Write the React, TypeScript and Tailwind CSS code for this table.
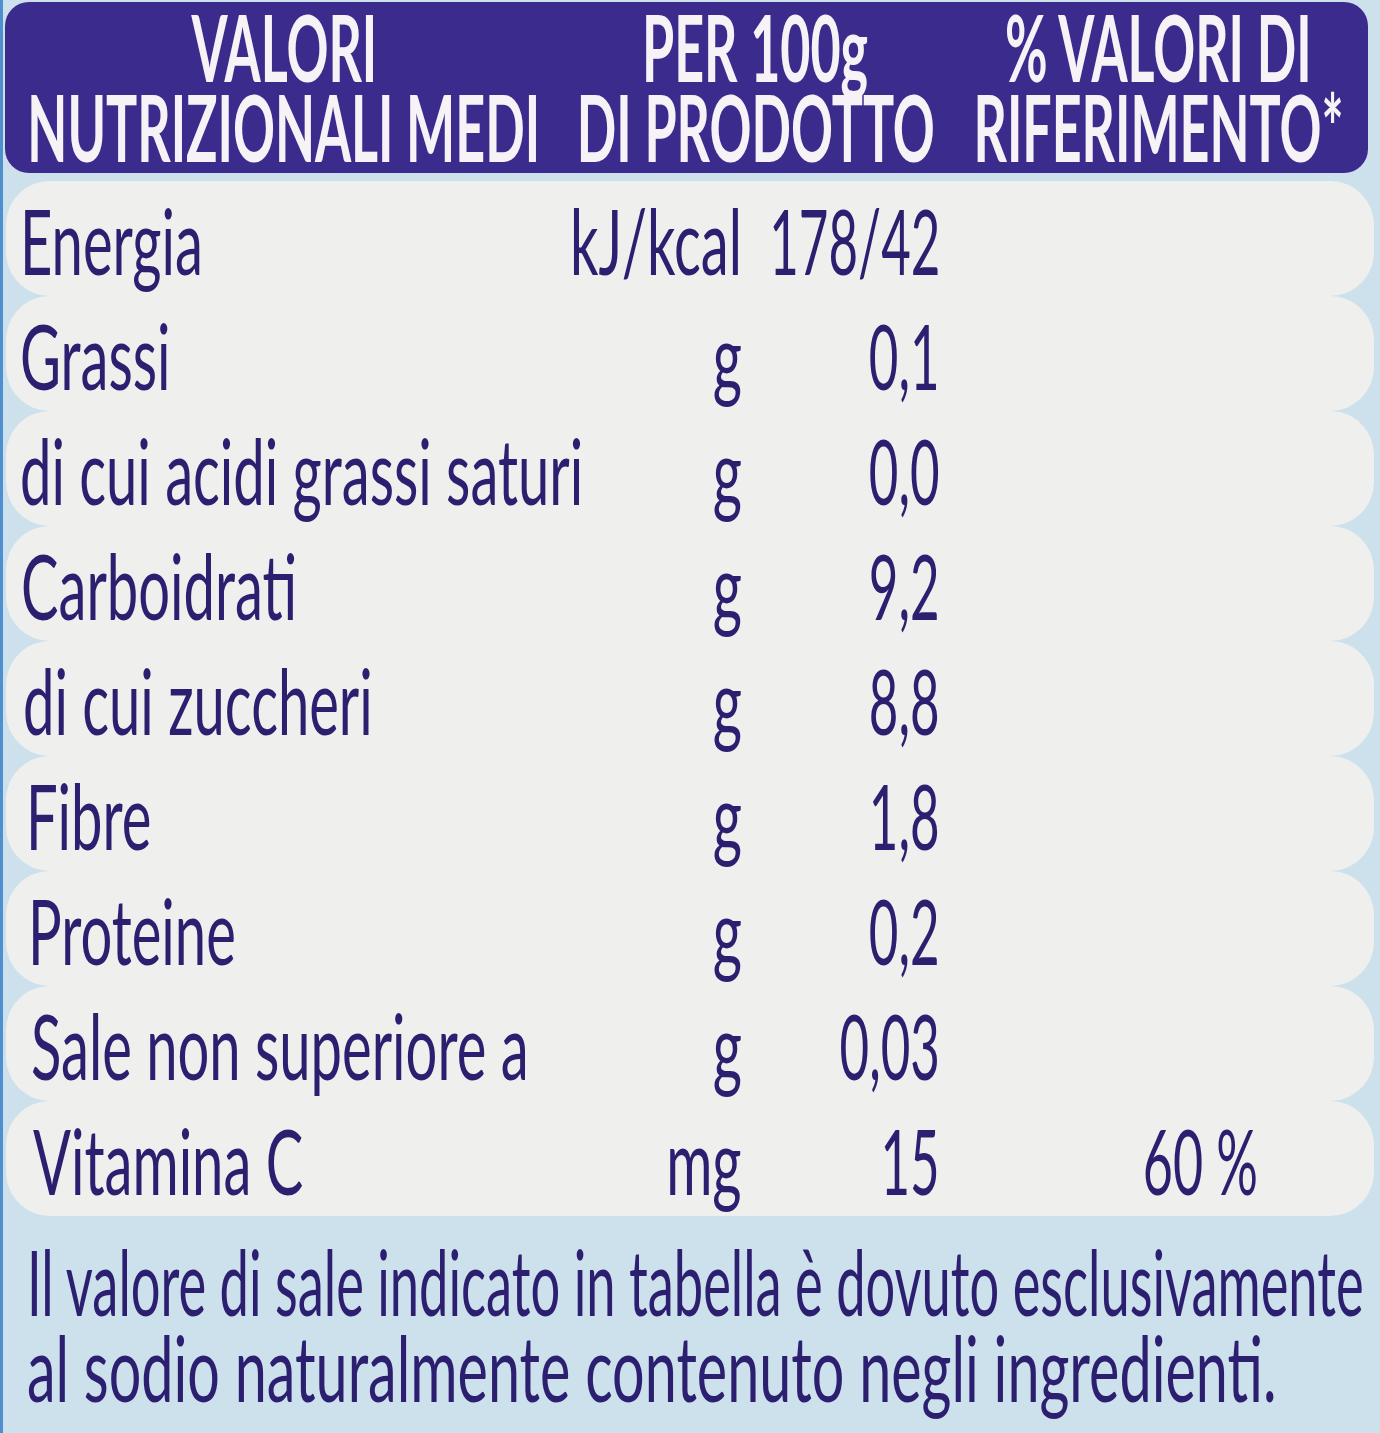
import React from 'react'

const rows = [
  { label: 'Energia', unit: 'kJ/kcal', value: '178/42', pct: '', pl: 'pl-[14px]' },
  { label: 'Grassi', unit: 'g', value: '0,1', pct: '', pl: 'pl-[14px]' },
  { label: 'di cui acidi grassi saturi', unit: 'g', value: '0,0', pct: '', pl: 'pl-[14px]' },
  { label: 'Carboidrati', unit: 'g', value: '9,2', pct: '', pl: 'pl-[15px]' },
  { label: 'di cui zuccheri', unit: 'g', value: '8,8', pct: '', pl: 'pl-[17px]' },
  { label: 'Fibre', unit: 'g', value: '1,8', pct: '', pl: 'pl-[20px]' },
  { label: 'Proteine', unit: 'g', value: '0,2', pct: '', pl: 'pl-[22px]' },
  { label: 'Sale non superiore a', unit: 'g', value: '0,03', pct: '', pl: 'pl-[25px]' },
  { label: 'Vitamina C', unit: 'mg', value: '15', pct: '60 %', pl: 'pl-[27px]' },
]

type Align = 'left' | 'right' | 'center'

const origins: Record<Align, string> = {
  left: 'origin-left',
  right: 'origin-right',
  center: 'origin-center',
}

// the print uses a condensed face, so every run of text gets squeezed horizontally
function Narrow({
  children,
  align = 'left',
  squeeze = 'scale-x-[0.61]',
}: {
  children: React.ReactNode
  align?: Align
  squeeze?: string
}) {
  return <span className={`inline-block whitespace-nowrap ${squeeze} ${origins[align]}`}>{children}</span>
}

function HeaderCell({ lines }: { lines: string[] }) {
  return (
    <div className="flex min-w-0 flex-col items-center">
      {lines.map((l) => (
        <div key={l} className="flex h-[80px] w-full justify-center">
          <Narrow align="center" squeeze="scale-x-[0.565]">
            {l}
          </Narrow>
        </div>
      ))}
    </div>
  )
}

export default function App() {
  return (
    <div
      className="h-[1433px] w-[1380px] overflow-hidden border-l-[3px] border-[#4f8fd0] bg-[#cde1ec] text-[#2c1f70]"
      style={{ fontFamily: 'Lato, "Open Sans", sans-serif' }}
    >
      <div className="ml-[2px] mr-[12px] mt-[2px] grid grid-cols-[558px_385px_minmax(0,1fr)] rounded-[24px] bg-[#3b2b8d] pb-[6px] pt-[5px] text-[92px] font-bold leading-[80px] text-[#f6f2f6]">
        <HeaderCell lines={['VALORI', 'NUTRIZIONALI MEDI']} />
        <HeaderCell lines={['PER 100g', 'DI PRODOTTO']} />
        <HeaderCell lines={['% VALORI DI', 'RIFERIMENTO*']} />
      </div>

      <div className="mt-[8px] flex flex-col">
        {rows.map((r) => (
          <div
            key={r.label}
            className={`ml-[3px] mr-[6px] flex h-[115px] rounded-[44px] bg-[#efefed] pt-[13px] pr-[116px] text-[92px] leading-none ${r.pl}`}
          >
            <div className="min-w-0 flex-1">
              <Narrow>{r.label}</Narrow>
            </div>
            <div className="flex w-[170px] justify-end">
              <Narrow align="right">{r.unit}</Narrow>
            </div>
            <div className="flex w-[198px] justify-end">
              <Narrow align="right" squeeze="scale-x-[0.555]">
                {r.value}
              </Narrow>
            </div>
            <div className="flex w-[318px] justify-end">
              <Narrow align="right" squeeze="scale-x-[0.565]">
                {r.pct}
              </Narrow>
            </div>
          </div>
        ))}
      </div>

      <div className="pl-[24px] pt-[22px] text-[92px] leading-[86px]">
        <div>
          <Narrow squeeze="scale-x-[0.57]">Il valore di sale indicato in tabella è dovuto esclusivamente</Narrow>
        </div>
        <div>
          <Narrow squeeze="scale-x-[0.625]">al sodio naturalmente contenuto negli ingredienti.</Narrow>
        </div>
      </div>
    </div>
  )
}
